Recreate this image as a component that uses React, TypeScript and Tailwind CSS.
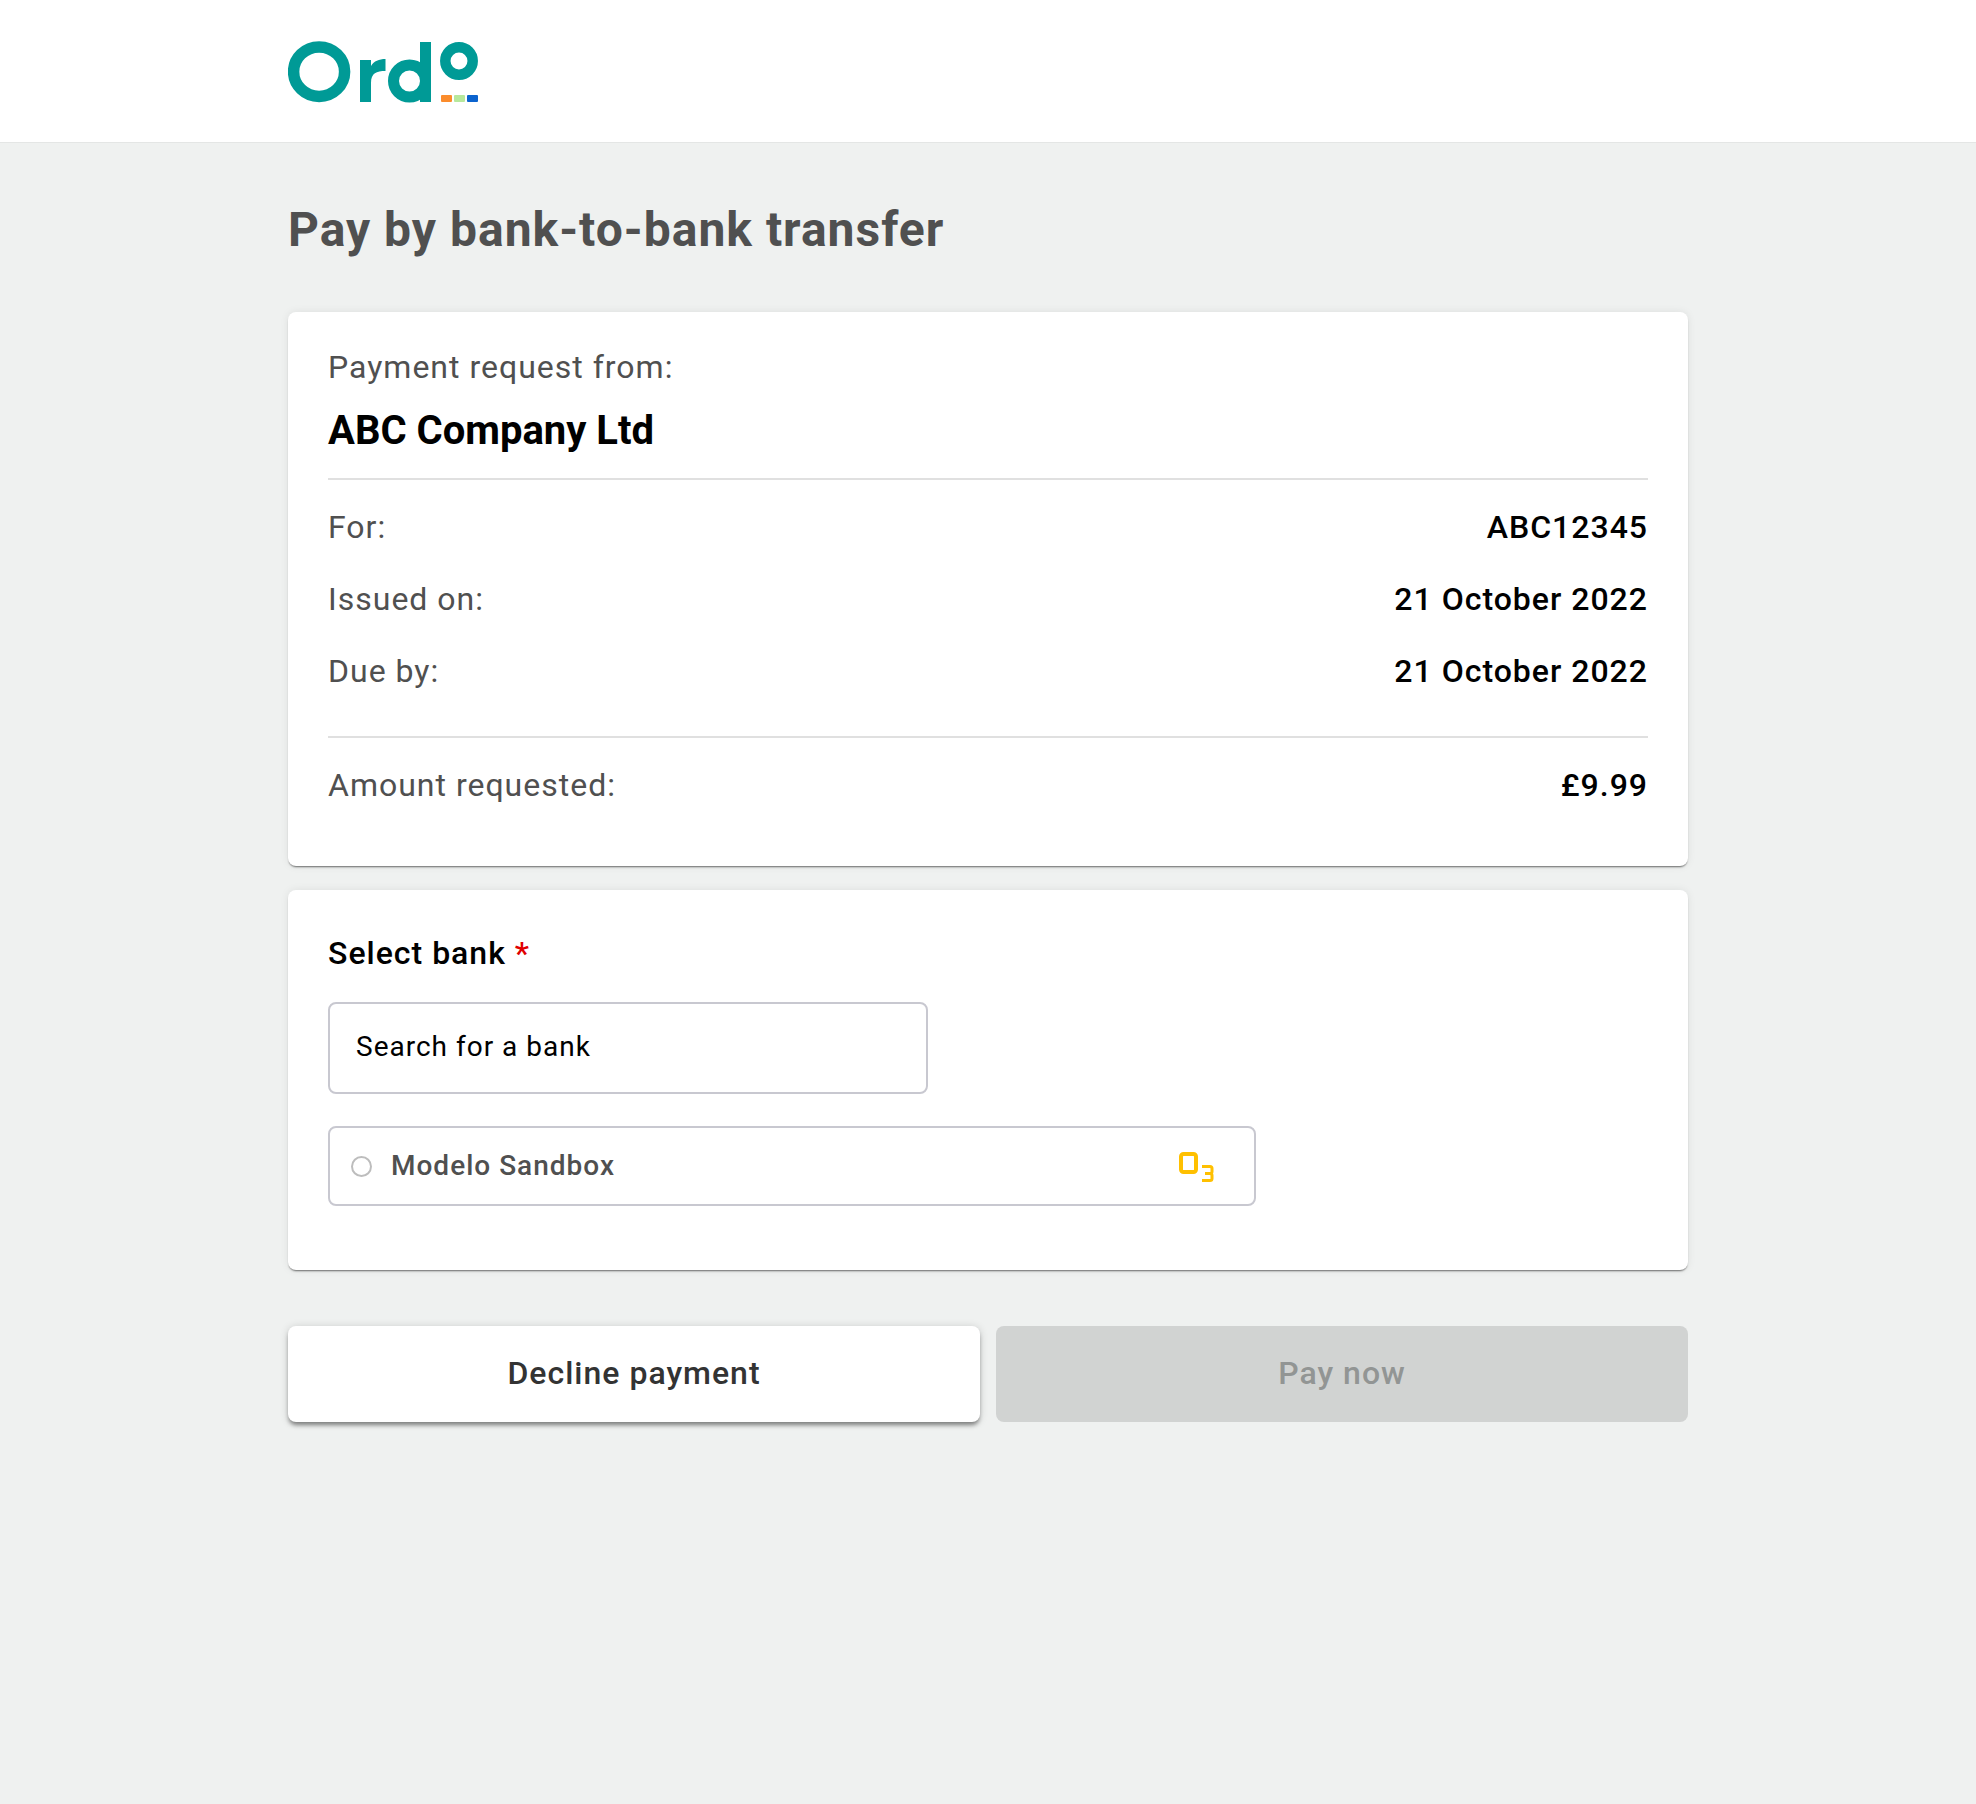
function OrdoLogo() {
  return (
    <svg width="192" height="64" viewBox="0 0 192 64" fill="none" className="block">
      <ellipse cx="31.100" cy="31.700" rx="25.500" ry="24.700" stroke="#009a96" strokeWidth="11.500" />
      <path d="M72 62V20h11v6c3-5 8-7 14.500-7v12c-9 0-14.500 2-14.500 12v19z" fill="#009a96" />
      <circle cx="121.500" cy="41" r="16" stroke="#009a96" strokeWidth="11" />
      <path d="M137.500 2V62" stroke="#009a96" strokeWidth="11" />
      <circle cx="171" cy="21" r="13.700" stroke="#009a96" strokeWidth="10.500" />
      <rect x="153" y="55" width="11" height="7" rx="1" fill="#fb8c2c" />
      <rect x="166" y="55" width="11" height="7" rx="1" fill="#b7e89c" />
      <rect x="179" y="55" width="11" height="7" rx="1" fill="#0b63ce" />
    </svg>
  );
}

function Row({ label, value }: { label: string; value: string }) {
  return (
    <div className="flex items-center justify-between h-[72px]">
      <span className="text-[32px] text-[#505050] tracking-[1px]">{label}</span>
      <span className="text-[32px] font-medium text-black tracking-[1px]">{value}</span>
    </div>
  );
}

export default function App() {
  return (
    <div className="min-h-screen bg-[#eff1f0] font-['Roboto',sans-serif]">
      <header className="h-[143px] bg-white border-b border-[#e4e6e5]">
        <div className="w-[1400px] mx-auto pt-[40px]">
          <OrdoLogo />
        </div>
      </header>

      <main className="w-[1400px] mx-auto">
        <h1 className="mt-[56px] text-[48px] leading-[62px] font-bold text-[#505050] tracking-[1px]">
          Pay by bank-to-bank transfer
        </h1>

        <section className="mt-[51px] bg-white rounded-lg shadow-[0_2px_2px_-1px_rgba(0,0,0,0.55),0_0_8px_rgba(0,0,0,0.08)] px-10 pt-[33px] h-[554px]">
          <p className="text-[32px] leading-[44px] text-[#505050] tracking-[1px]">Payment request from:</p>
          <h2 className="mt-[16px] text-[40px] leading-[52px] font-bold text-black pb-[21px] border-b-2 border-[#e0e0e0]">
            ABC Company Ltd
          </h2>
          <div className="pt-[11px] pb-[29px] border-b-2 border-[#e0e0e0]">
            <Row label="For:" value="ABC12345" />
            <Row label="Issued on:" value="21 October 2022" />
            <Row label="Due by:" value="21 October 2022" />
          </div>
          <div className="pt-[11px]">
            <Row label="Amount requested:" value="£9.99" />
          </div>
        </section>

        <section className="mt-[24px] bg-white rounded-lg shadow-[0_2px_2px_-1px_rgba(0,0,0,0.55),0_0_8px_rgba(0,0,0,0.08)] px-10 pt-[41px] h-[380px]">
          <p className="text-[32px] leading-[44px] font-medium text-black tracking-[1px]">
            Select bank <span className="text-[#e00000]">*</span>
          </p>
          <div className="mt-[27px] w-[600px] h-[92px] border-2 border-[#c8c8d0] rounded-lg flex items-center px-[26px] pb-[2px]">
            <input
              readOnly
              placeholder="Search for a bank"
              className="w-full bg-transparent outline-none text-[28px] tracking-[1px] placeholder:text-black"
            />
          </div>
          <div className="mt-[32px] w-[928px] h-[80px] border-2 border-[#c8c8d0] rounded-lg flex items-center pl-[21px] pr-[40px]">
            <span className="w-[21px] h-[21px] rounded-full border-2 border-[#bdbdbd]" />
            <span className="ml-[19px] flex-1 text-[28px] font-medium text-[#505050] tracking-[1px]">Modelo Sandbox</span>
            <svg width="36" height="32" viewBox="0 0 36 32" fill="none">
              <rect x="3" y="4" width="15" height="18" rx="2.500" stroke="#ffc000" strokeWidth="4" />
              <path
                d="M24 16.500H32a2 2 0 0 1 2 2V21.500a2 2 0 0 1-2 2H27M32 23.500a2 2 0 0 1 2 2v3a2 2 0 0 1-2 2H24"
                stroke="#ffc000"
                strokeWidth="3"
              />
            </svg>
          </div>
        </section>

        <div className="mt-[56px] grid grid-cols-2 gap-4">
          <button className="h-[96px] pb-[2px] bg-white rounded-lg shadow-[0_4px_4px_-1px_rgba(0,0,0,0.42),0_1px_9px_rgba(0,0,0,0.16)] text-[32px] font-medium text-[#333] tracking-[1px]">
            Decline payment
          </button>
          <button className="h-[96px] pb-[2px] bg-[#d1d3d2] rounded-lg text-[32px] font-medium text-[#929594] tracking-[1px]">
            Pay now
          </button>
        </div>
      </main>
    </div>
  );
}
